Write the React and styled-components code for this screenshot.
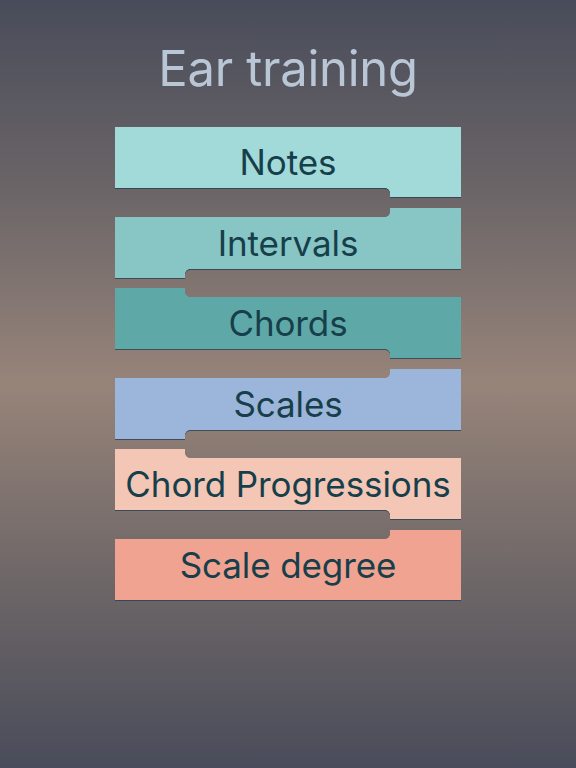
import React from 'react';
import styled, { createGlobalStyle } from 'styled-components';

const GlobalStyle = createGlobalStyle`
  html, body {
    margin: 0;
    padding: 0;
  }
  body {
    font-family: Inter, "Noto Sans", sans-serif;
  }
`;

const exercises = [
  { label: 'Notes', color: '#a2dad9', bottom: 'right' },
  { label: 'Intervals', color: '#87c6c4', top: 'right', bottom: 'left' },
  { label: 'Chords', color: '#5fa8a8', top: 'left', bottom: 'right' },
  { label: 'Scales', color: '#9cb5da', top: 'right', bottom: 'left' },
  { label: 'Chord Progressions', color: '#f3c6b5', top: 'left', bottom: 'right' },
  { label: 'Scale degree', color: '#f1a391', top: 'right' },
];

const Tab = ({ side, edge, color }) => {
  if (!side) return null;
  return <TabPiece $side={side} $edge={edge} $color={color} />;
};

const App = () => {
  return (
    <>
      <GlobalStyle />
      <Page>
        <Title>Ear training</Title>
        <List>
          {exercises.map((item) => (
            <Card key={item.label}>
              <Shape>
                <Tab side={item.top} edge="top" color={item.color} />
                <Body $color={item.color} />
                <Tab side={item.bottom} edge="bottom" color={item.color} />
              </Shape>
              <Label>{item.label}</Label>
            </Card>
          ))}
        </List>
      </Page>
    </>
  );
};

export default App;

const Page = styled.div`
  width: 576px;
  height: 768px;
  display: flex;
  flex-direction: column;
  align-items: center;
  background: linear-gradient(
    180deg,
    #484c5a 0%,
    #6a6467 24%,
    #978479 50%,
    #6d6667 76%,
    #494c5a 100%
  );
  overflow: hidden;
`;

const Title = styled.h1`
  margin: 38px 0 0;
  height: 62px;
  line-height: 62px;
  font-size: 49px;
  font-weight: 400;
  color: #b9c6d6;
  letter-spacing: -0.3px;
`;

const List = styled.div`
  margin-top: 27px;
  width: 346px;
  display: flex;
  flex-direction: column;
  gap: 10.6px;
`;

const Card = styled.div`
  height: 70px;
  display: grid;
  cursor: pointer;
`;

const Shape = styled.div`
  grid-area: 1 / 1;
  display: flex;
  flex-direction: column;
  filter: drop-shadow(0.8px 1px 0 rgba(38, 62, 82, 0.75));
`;

const Body = styled.div`
  flex: 1;
  background: ${(p) => p.$color};
`;

const TabPiece = styled.div`
  position: relative;
  height: 9px;
  width: ${(p) => (p.$side === 'right' ? '71px' : '70px')};
  align-self: ${(p) => (p.$side === 'right' ? 'flex-end' : 'flex-start')};
  background: ${(p) => p.$color};

  &::before {
    content: '';
    position: absolute;
    width: 5px;
    height: 5px;
    ${(p) => (p.$side === 'right' ? 'left: -5px;' : 'right: -5px;')}
    ${(p) => (p.$edge === 'bottom' ? 'top: 0;' : 'bottom: 0;')}
    background: radial-gradient(
      circle at ${(p) => (p.$side === 'right' ? '0' : '100%')}
        ${(p) => (p.$edge === 'bottom' ? '100%' : '0')},
      transparent 4.6px,
      ${(p) => p.$color} 5.2px
    );
  }
`;

const Label = styled.div`
  grid-area: 1 / 1;
  place-self: center;
  z-index: 1;
  font-size: 35px;
  font-weight: 400;
  color: #173f4b;
  white-space: nowrap;
  letter-spacing: -0.1px;
`;
